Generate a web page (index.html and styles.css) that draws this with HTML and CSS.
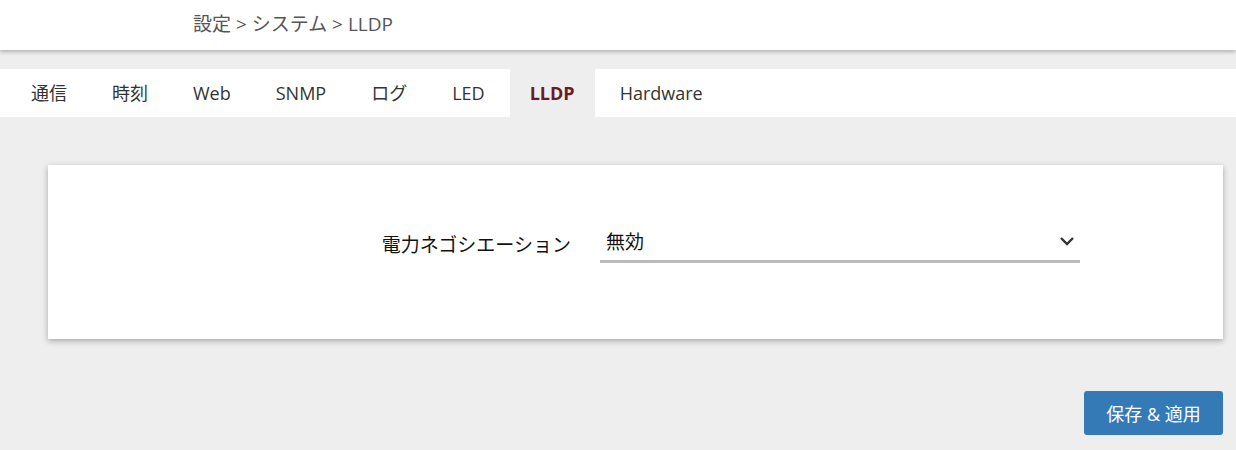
FILE: index.html
```html
<!DOCTYPE html>
<html lang="ja">
<head>
  <meta charset="UTF-8" />
  <meta name="viewport" content="width=device-width, initial-scale=1.0" />
  <title>LLDP</title>
  <link rel="stylesheet" href="styles.css">
</head>
<body>
  <header class="topbar">
    <div class="crumbs">設定 &gt; システム &gt; LLDP</div>
  </header>
  <nav class="tabs">
    <a href="#">通信</a>
    <a href="#">時刻</a>
    <a href="#">Web</a>
    <a href="#">SNMP</a>
    <a href="#">ログ</a>
    <a href="#">LED</a>
    <a href="#" class="active">LLDP</a>
    <a href="#">Hardware</a>
  </nav>
  <main class="content">
    <section class="card">
      <div class="row">
        <label class="label" for="poe">電力ネゴシエーション</label>
        <div class="select">
          <span class="value">無効</span>
          <svg class="chev" width="16" height="10" viewBox="0 0 16 10">
            <polyline points="2,2 8,8 14,2" fill="none" stroke="#333" stroke-width="2.4" />
          </svg>
        </div>
      </div>
    </section>
    <div class="actions">
      <button class="save">保存 &amp; 適用</button>
    </div>
  </main>
</body>
</html>
```

FILE: styles.css
```css
body {
  margin: 0;
  font-family: 'Open Sans', 'Noto Sans CJK JP', sans-serif;
  background: #eeeeee;
  color: #333;
}
.topbar {
  height: 50px;
  background: #fff;
  box-shadow: 0 2px 4px rgba(0, 0, 0, 0.25);
  position: relative;
}
.crumbs {
  padding-left: 193px;
  line-height: 48px;
  font-size: 19px;
  color: #555;
}
.tabs {
  margin-top: 19px;
  height: 48px;
  background: #fff;
  display: flex;
  gap: 5px;
  padding-left: 11px;
}
.tabs a {
  padding: 0 20px;
  line-height: 48px;
  font-size: 18px;
  color: #333;
  text-decoration: none;
}
.tabs a.active {
  background: #eeeeee;
  color: #6a1b25;
  font-weight: bold;
}
.content {
  padding: 48px 13px 0 48px;
}
.card {
  background: #fff;
  height: 174px;
  box-sizing: border-box;
  padding-top: 56px;
  box-shadow: 0 2px 6px rgba(0, 0, 0, 0.3);
}
.row {
  display: flex;
  align-items: center;
}
.label {
  width: 523px;
  text-align: right;
  font-size: 19px;
  color: #111;
  padding-right: 29px;
  padding-top: 4px;
}
.select {
  width: 480px;
  height: 42px;
  border-bottom: 3px solid #bbb;
  display: flex;
  align-items: center;
  justify-content: space-between;
  padding: 0 5px 0 6px;
  box-sizing: border-box;
  font-size: 19px;
  color: #111;
}
.actions {
  display: flex;
  justify-content: flex-end;
  margin-top: 52px;
}
.save {
  width: 139px;
  height: 44px;
  background: #337ab7;
  border: none;
  border-radius: 3px;
  color: #fff;
  font-family: 'Open Sans', 'Noto Sans CJK JP', sans-serif;
  font-size: 18px;
}
```
